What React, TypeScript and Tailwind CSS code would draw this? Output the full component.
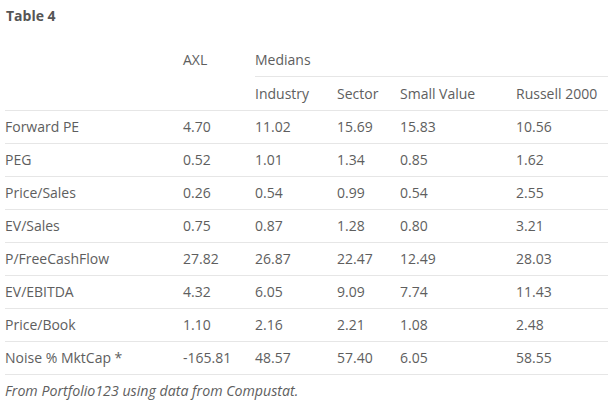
const rows: [string, string, string, string, string, string][] = [
  ['Forward PE', '4.70', '11.02', '15.69', '15.83', '10.56'],
  ['PEG', '0.52', '1.01', '1.34', '0.85', '1.62'],
  ['Price/Sales', '0.26', '0.54', '0.99', '0.54', '2.55'],
  ['EV/Sales', '0.75', '0.87', '1.28', '0.80', '3.21'],
  ['P/FreeCashFlow', '27.82', '26.87', '22.47', '12.49', '28.03'],
  ['EV/EBITDA', '4.32', '6.05', '9.09', '7.74', '11.43'],
  ['Price/Book', '1.10', '2.16', '2.21', '1.08', '2.48'],
  ['Noise % MktCap *', '-165.81', '48.57', '57.40', '6.05', '58.55'],
];

export default function App() {
  return (
    <div className="w-[610px] h-[406px] bg-white text-[#5e5e5e] font-['Open_Sans',sans-serif] text-[14px]">
      <div className="pl-[6px] pt-[6px] h-[43px] font-bold text-[14px] leading-[19px] text-[#555]">Table 4</div>
      <table className="ml-[5px] w-[603px] border-collapse table-fixed">
        <colgroup>
          <col className="w-[178px]" />
          <col className="w-[72px]" />
          <col className="w-[82px]" />
          <col className="w-[63px]" />
          <col className="w-[116px]" />
          <col className="w-[92px]" />
        </colgroup>
        <thead>
          <tr className="h-[33px]">
            <th />
            <th className="text-left font-normal">AXL</th>
            <th colSpan={4} className="text-left font-normal border-b border-[#e6e6e6]">
              Medians
            </th>
          </tr>
          <tr className="h-[34px] border-b border-[#e6e6e6]">
            <th />
            <th />
            <th className="text-left font-normal">Industry</th>
            <th className="text-left font-normal">Sector</th>
            <th className="text-left font-normal">Small Value</th>
            <th className="text-left font-normal">Russell 2000</th>
          </tr>
        </thead>
        <tbody>
          {rows.map((r) => (
            <tr key={r[0]} className="h-[33px] border-b border-[#e6e6e6]">
              {r.map((c, i) => (
                <td key={i} className="p-0">
                  {c}
                </td>
              ))}
            </tr>
          ))}
        </tbody>
      </table>
      <div className="pl-[5px] pt-[6px] italic text-[14.2px] leading-[19px]">
        From Portfolio123 using data from Compustat.
      </div>
    </div>
  );
}
